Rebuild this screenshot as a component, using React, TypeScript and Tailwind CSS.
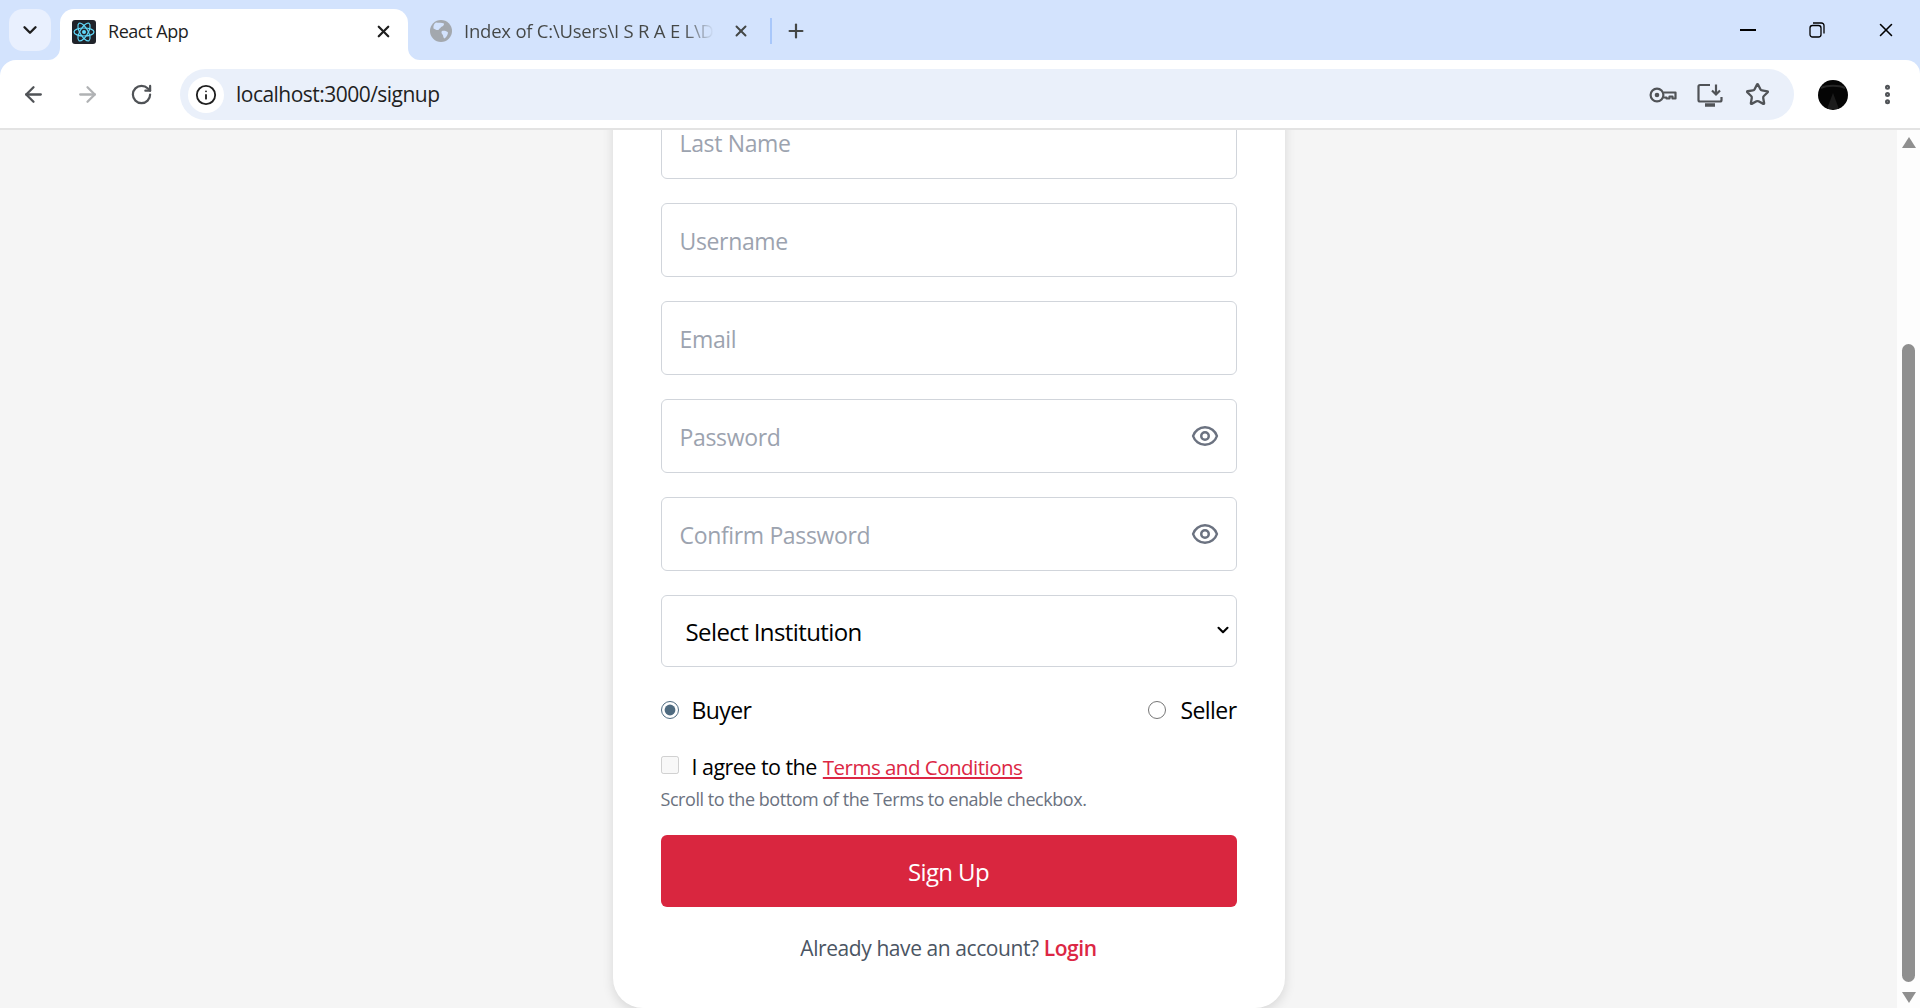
import React from "react";
import { ArrowLeft, ArrowRight, RotateCw, Info, Star, X, Plus, ChevronDown, EllipsisVertical } from "lucide-react";

const ReactLogo = () => (
  <svg width="24" height="24" viewBox="0 0 24 24" className="rounded-[3px] bg-[#20232a] shrink-0">
    <g fill="none" stroke="#61dafb" strokeWidth="1.2">
      <ellipse cx="12" cy="12" rx="10" ry="4" />
      <ellipse cx="12" cy="12" rx="10" ry="4" transform="rotate(60 12 12)" />
      <ellipse cx="12" cy="12" rx="10" ry="4" transform="rotate(120 12 12)" />
    </g>
    <circle cx="12" cy="12" r="2" fill="#61dafb" />
  </svg>
);

const Globe = () => (
  <svg width="22" height="22" viewBox="0 0 22 22" className="shrink-0">
    <circle cx="11" cy="11" r="11" fill="#a3a8ae" />
    <path d="M6 2.500c2 .5 6 0 8 1 .5 1.500-1.500 3-3 3.500-.5 1.500-2 1.500-2.500 3-2 .5-3.500-1-5-1.500C3 6 4 3.500 6 2.500zM12 11c2-.5 5 0 6 1.500 0 2-1.500 4.500-3.500 6-1.500-.5-1-3-2-4-1-1-1.500-2.500-.5-3.500z" fill="#d3e3fd" />
  </svg>
);

const KeyIcon = () => (
  <svg width="28" height="16" viewBox="0 0 28 16" fill="none" stroke="#505357" strokeWidth="2.200">
    <circle cx="8" cy="8" r="6.400" />
    <circle cx="8" cy="8" r="2.300" fill="#505357" stroke="none" />
    <path d="M14.500 5.500H26.500V11.500H23.500V9.500H20.500V11.500H17.500V10.500H14.500" strokeLinejoin="round" />
  </svg>
);

const InstallIcon = () => (
  <svg width="26" height="24" viewBox="0 0 26 24" fill="none" stroke="#505357" strokeWidth="2.200">
    <path d="M13 2H3a1.500 1.500 0 0 0-1.500 1.500V17A1.500 1.500 0 0 0 3 18.500H23A1.500 1.500 0 0 0 24.500 17V14" />
    <path d="M8 22H18" strokeWidth="3.500" />
    <path d="M19 1.500V11M15 7.500L19 11.500L23 7.500" />
  </svg>
);

const RestoreIcon = () => (
  <svg width="16" height="16" viewBox="0 0 16 16" fill="none" stroke="#000" strokeWidth="1.300">
    <rect x="1" y="3.500" width="11" height="11.500" rx="2.500" />
    <path d="M4 1H12.500A2.500 2.500 0 0 1 15 3.500V11.500" />
  </svg>
);

const Avatar = () => (
  <svg width="30" height="30" viewBox="0 0 30 30" className="shrink-0">
    <circle cx="15" cy="15" r="15" fill="#050505" />
    <path d="M15 13L9 29H21Z" fill="#1c1c1c" />
    <path d="M3 8C9 5 21 5 27 8" stroke="#262626" strokeWidth="2" fill="none" />
  </svg>
);

const EyeIcon = () => (
  <svg
    width="30"
    height="30"
    viewBox="0 0 24 24"
    fill="none"
    stroke="#6b7280"
    strokeWidth="2"
    strokeLinecap="round"
    strokeLinejoin="round"
    className="absolute right-[17px] top-[22px]"
  >
    <path d="M15 12a3 3 0 1 1-6 0 3 3 0 0 1 6 0z" />
    <path d="M2.458 12C3.732 7.943 7.523 5 12 5c4.478 0 8.268 2.943 9.542 7-1.274 4.057-5.064 7-9.542 7-4.477 0-8.268-2.943-9.542-7z" />
  </svg>
);

const Field = ({ placeholder, eye }: { placeholder: string; eye?: boolean }) => (
  <div className="relative mb-6 h-[74px]">
    <input
      type="text"
      placeholder={placeholder}
      className="h-full w-full rounded-[6px] border border-[#d1d5db] bg-white pl-[18px] pr-14 pt-[2px] text-[23px] tracking-[-0.015em] text-black outline-none placeholder:text-[#9ca3af]"
    />
    {eye && <EyeIcon />}
  </div>
);

export default function App() {
  return (
    <div
      className="flex h-[1008px] w-[1920px] flex-col overflow-hidden bg-[#d3e3fd] text-black"
      style={{ fontFamily: '"Open Sans", "Noto Sans", sans-serif' }}
    >
      {/* tab strip */}
      <div className="flex h-[60px] items-end pl-[9px]">
        <div className="mb-[9px] flex h-[42px] w-[42px] items-center justify-center rounded-[14px] bg-[#e9f0fe]">
          <ChevronDown size={22} strokeWidth={2.600} className="text-[#1f1f1f]" />
        </div>
        <div className="relative ml-[9px] flex h-[51px] w-[348px] items-center rounded-t-[14px] bg-white pb-[6px] pl-3 pr-[15px]">
          <svg width="12" height="12" viewBox="0 0 12 12" className="absolute -left-3 bottom-0">
            <path d="M12 0V12H0A12 12 0 0 0 12 0Z" fill="#fff" />
          </svg>
          <svg width="12" height="12" viewBox="0 0 12 12" className="absolute -right-3 bottom-0">
            <path d="M0 0V12H12A12 12 0 0 1 0 0Z" fill="#fff" />
          </svg>
          <ReactLogo />
          <span className="ml-3 flex-1 text-[18px] tracking-[-0.025em] text-[#1f1f1f]">React App</span>
          <X size={19} strokeWidth={2.800} className="text-[#1f1f1f]" />
        </div>
        <div className="ml-[22px] flex h-[51px] w-[420px] shrink-0 items-center pb-[7px]">
          <Globe />
          <span className="ml-3 w-[250px] overflow-hidden whitespace-nowrap bg-[linear-gradient(90deg,#444746_88%,#d3e3fd_100%)] bg-clip-text text-[18.500px] tracking-[-0.012em] text-transparent">
            Index of C:\Users\I S R A E L\Desktop
          </span>
          <X size={18} strokeWidth={2.600} className="ml-[18px] text-[#444746]" />
          <div className="ml-[20px] h-[26px] w-[2px] bg-[#a8c7fa]" />
          <Plus size={22} strokeWidth={2.400} className="ml-[13px] text-[#444746]" />
        </div>
        <div className="mb-[9px] ml-auto flex h-[42px] items-center pr-[23px] text-black">
          <div className="h-[2px] w-[16px] bg-black" />
          <div className="ml-[53px]"><RestoreIcon /></div>
          <X size={22} strokeWidth={1.700} className="ml-[50px]" />
        </div>
      </div>

      {/* toolbar */}
      <div className="flex h-[70px] items-center rounded-tl-[16px] rounded-tr-[14px] border-b-[2px] border-[#e3e3e3] bg-white pt-[1px]">
        <ArrowLeft size={25} strokeWidth={2.200} className="ml-[21px] text-[#505357]" />
        <ArrowRight size={25} strokeWidth={2.200} className="ml-[29px] text-[#b0b2b4]" />
        <RotateCw size={23} strokeWidth={2.300} className="ml-[30px] text-[#505357]" />
        <div className="ml-[27px] flex h-[51px] w-[1614px] items-center rounded-full bg-[#eaf0fa] pl-[8px] pr-[24px]">
          <div className="flex h-9 w-9 items-center justify-center rounded-full bg-white">
            <Info size={22} strokeWidth={2} className="text-[#1f1f1f]" />
          </div>
          <span className="ml-[12px] flex-1 text-[21px] tracking-[-0.025em] text-[#1f1f1f]">localhost:3000/signup</span>
          <KeyIcon />
          <div className="ml-[20px]"><InstallIcon /></div>
          <Star size={25} strokeWidth={2.200} className="ml-[22px] text-[#505357]" />
        </div>
        <div className="ml-[24px]"><Avatar /></div>
        <EllipsisVertical size={25} strokeWidth={2.800} className="ml-[27px] text-[#505357]" />
      </div>

      {/* page */}
      <div className="flex min-h-0 flex-1 bg-[#f5f5f5]">
        <main className="flex min-w-0 flex-1 flex-col items-center justify-end overflow-hidden">
          <div className="w-[672px] shrink-0 rounded-b-[30px] bg-white px-12 pb-[45px] shadow-[0_4px_12px_rgba(0,0,0,0.12)]">
            <Field placeholder="Last Name" />
            <Field placeholder="Username" />
            <Field placeholder="Email" />
            <Field placeholder="Password" eye />
            <Field placeholder="Confirm Password" eye />
            <div className="relative h-[72px]">
              <select className="h-full w-full appearance-none rounded-[6px] border border-[#d1d5db] bg-white pl-6 pr-1 pt-[2px] text-[24px] tracking-[-0.025em] text-black outline-none">
                <option>Select Institution</option>
              </select>
              <ChevronDown size={18} strokeWidth={2.800} className="pointer-events-none absolute right-[5px] top-[26px] text-black" />
            </div>
            <div className="mt-[28px] flex h-[30px] items-center justify-between text-[23px] tracking-[-0.025em]">
              <label className="flex items-center">
                <input type="radio" name="role" defaultChecked className="m-0 h-[18px] w-[18px] accent-[#4f6b80]" />
                <span className="ml-[13px]">Buyer</span>
              </label>
              <label className="flex items-center">
                <input type="radio" name="role" className="m-0 h-[18px] w-[18px]" />
                <span className="ml-[14px]">Seller</span>
              </label>
            </div>
            <div className="mt-[25px] flex h-[30px] items-center">
              <input type="checkbox" disabled className="m-0 -mt-[1px] h-[18px] w-[18px]" />
              <span className="ml-[13px] pt-[4px] text-[21.500px] tracking-[-0.025em]">I agree to the</span>
              <a className="ml-[6px] pt-[4px] text-[20.500px] tracking-[-0.025em] text-[#dc2744] underline">Terms and Conditions</a>
            </div>
            <p className="mt-[7px] h-[25px] text-[18px] leading-6 tracking-[-0.025em] text-[#6b7280]">
              Scroll to the bottom of the Terms to enable checkbox.
            </p>
            <button className="mt-[23px] h-[72px] w-full rounded-[6px] bg-[#d9263f] pt-[2px] text-[24px] tracking-[-0.025em] text-white">
              Sign Up
            </button>
            <p className="mt-[26px] h-[30px] text-center text-[21px] leading-[30px] tracking-[-0.02em] text-[#4b5563]">
              Already have an account? <a className="font-semibold text-[#dc2744]">Login</a>
            </p>
          </div>
        </main>
        <aside className="flex w-[23px] shrink-0 flex-col items-center bg-[#fdfdfd] pt-[7px]">
          <div className="h-0 w-0 border-x-[7px] border-b-[11px] border-x-transparent border-b-[#8f8f8f]" />
          <div className="mt-[196px] w-[13px] flex-1 rounded-full bg-[#8f8f8f]" />
          <div className="mb-[5px] mt-[10px] h-0 w-0 border-x-[7px] border-t-[11px] border-x-transparent border-t-[#8f8f8f]" />
        </aside>
      </div>
    </div>
  );
}
